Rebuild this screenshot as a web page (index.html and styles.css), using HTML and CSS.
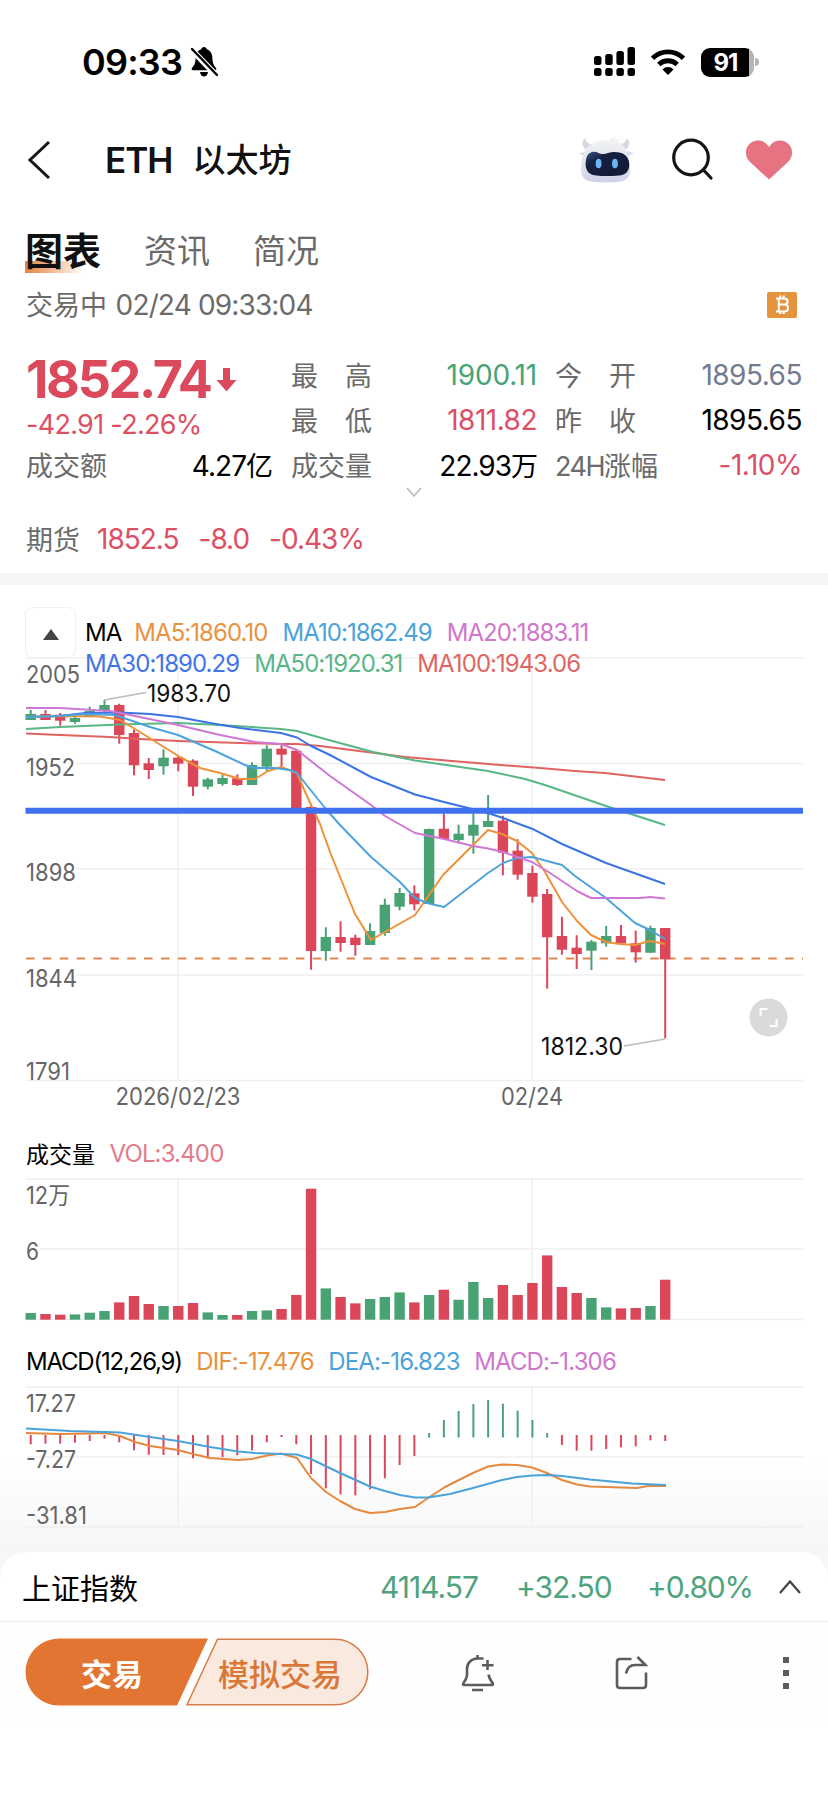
FILE: index.html
```
<!DOCTYPE html>
<html lang="zh-CN">
<head>
  <meta charset="UTF-8" />
  <meta name="viewport" content="width=device-width, initial-scale=1" />
  <title>ETH 以太坊</title>
  <link rel="stylesheet" href="styles.css">
</head>
<body>
  <!-- status bar -->
  <div class="status-bar">
    <span class="time">09:33</span>
    <svg class="mute" width="30" height="32" viewBox="0 0 30 32"><path d="M15 1c-1.600 0-2.600 1-2.800 2.300C8.500 4.600 6.700 8 6.600 12c-.1 5.500-1.600 7.700-3.600 9.900-.7.800-.4 2.300 1.200 2.300h21.600c1.600 0 1.900-1.500 1.200-2.300-2-2.200-3.500-4.400-3.600-9.900-.1-4-1.900-7.400-5.600-8.700C17.600 2 16.600 1 15 1zM11 26h8c-.4 3-2 4.500-4 4.500S11.400 29 11 26z"/><path d="M2 3l26 27" stroke="#fff" stroke-width="6"/><path d="M3 3l25 26" stroke="#000" stroke-width="2.400" stroke-linecap="round"/></svg>
    <svg class="signal" width="42" height="30" viewBox="0 0 42 30"><rect x="0" y="9" width="7.500" height="9" rx="2.500"/><rect x="11.200" y="7" width="7.500" height="11" rx="2.500"/><rect x="22.400" y="4" width="7.500" height="14" rx="2.500"/><rect x="33.500" y="0" width="7.500" height="18" rx="2.500"/><rect x="0" y="21" width="7.500" height="8" rx="2.500"/><rect x="11.200" y="21" width="7.500" height="8" rx="2.500"/><rect x="22.400" y="21" width="7.500" height="8" rx="2.500"/><rect x="33.500" y="21" width="7.500" height="8" rx="2.500"/></svg>
    <svg class="wifi" width="36" height="28" viewBox="0 0 36 28"><path d="M2.500 10.200a22 22 0 0 1 31 0M8.800 16.500a13.200 13.200 0 0 1 18.400 0" fill="none" stroke="#000" stroke-width="4.800"/><path d="M18 27l-5.600-5.600a8 8 0 0 1 11.200 0z"/></svg>
    <div class="battery"><span>91</span></div><i class="battery-tip"></i>
  </div>

  <header class="nav">
    <svg class="back" width="26" height="40" viewBox="0 0 26 40"><path d="M23 2L4 20l19 18"/></svg>
    <h1>ETH<span>以太坊</span></h1>
    <svg class="robot" width="61" height="48" viewBox="0 0 54 48" preserveAspectRatio="none">
      <defs>
        <linearGradient id="head" x1="0" y1="0" x2="0" y2="1"><stop offset="0" stop-color="#f4f5f8"/><stop offset=".6" stop-color="#e0e2e9"/><stop offset="1" stop-color="#cdd2e8"/></linearGradient>
        <linearGradient id="face" x1="0" y1="0" x2="1" y2="1"><stop offset="0" stop-color="#3a5488"/><stop offset=".3" stop-color="#16203f"/><stop offset="1" stop-color="#121936"/></linearGradient>
      </defs>
      <path d="M8 13C5 9 5 5 8 2c1 4 3 6 8 7zM45 13c3-4 3-8 0-11-1 4-3 6-8 7z" fill="#d5d8e2"/>
      <path d="M2 17l7-1v5zM51 17l-6-2v6z" fill="#d8dbe5"/>
      <path d="M14 8c5-4 9-3 15-4l6-4-1 4 5-1-2 3c8 4 9 11 10 20 2 10 2 19-11 20-6 .6-13 .6-19 0C4 45 4 37 5 27 6 18 7 12 14 8z" fill="url(#head)"/>
      <path d="M9 23c1-7 7-9 11-6 5 3 8-1 14-1 8 0 12 4 13 10 1 9-3 13-9 13.500-8 .7-14 .7-20 0C9 39 7.500 31 9 23z" fill="url(#face)"/>
      <ellipse cx="20" cy="27.500" rx="2.600" ry="4.700" fill="#69b5f5"/><ellipse cx="34.500" cy="27.500" rx="2.600" ry="4.700" fill="#69b5f5"/>
    </svg>
    <svg class="search" width="42" height="44" viewBox="0 0 42 44"><circle cx="19" cy="19.500" r="17.300"/><path d="M31.500 32l7.500 8"/></svg>
    <svg class="heart" width="48" height="40" viewBox="0 0 48 40"><path d="M24 39.500L4.500 21.500C-.5 16 0 8 4.500 4 9.500-.8 18-.5 22 4.500l2 2.500 2-2.500C30-.5 38.500-.8 43.500 4c4.500 4 5 12 0 17.500z"/></svg>
  </header>

  <nav class="tabs">
    <a class="tab active">图表</a>
    <a class="tab">资讯</a>
    <a class="tab">简况</a>
  </nav>

  <div class="session">
    <span>交易中 <b>02/24 09:33:04</b></span>
    <svg width="30" height="26" viewBox="0 0 30 26"><rect width="30" height="26" rx="2" fill="#e3943c"/><path d="M9 6.500h8.200c2.300 0 3.300 1.200 3.300 3 0 1.900-1.200 3-3.200 3 2.400 0 3.700 1.200 3.700 3.400 0 2.300-1.500 3.600-4 3.600H9M11.800 6.500v13M11.800 12.500h5.500M13.200 3.500v3M16.700 3.500v3M13.200 19.500v2.600M16.700 19.500v2.600" fill="none" stroke="#fff" stroke-width="2.100"/></svg>
  </div>

  <section class="quote">
    <div class="price">1852.74<svg width="21" height="25" viewBox="0 0 21 25"><path d="M7 1h7v12h6.500L10.500 24.500.5 13H7z"/></svg></div>
    <div class="change">-42.91 -2.26%</div>
    <div class="cell c1 r3"><label>成交额</label><span class="cn">4.27<em>亿</em></span></div>
    <div class="cell c2 r1"><label class="wide">最高</label><span class="green">1900.11</span></div>
    <div class="cell c2 r2"><label class="wide">最低</label><span class="red">1811.82</span></div>
    <div class="cell c2 r3"><label>成交量</label><span class="cn">22.93<em>万</em></span></div>
    <div class="cell c3 r1"><label class="wide">今开</label><span class="slate">1895.65</span></div>
    <div class="cell c3 r2"><label class="wide">昨收</label><span>1895.65</span></div>
    <div class="cell c3 r3"><label><b>24H</b>涨幅</label><span class="red">-1.10%</span></div>
  </section>
  <div class="more"><svg width="16" height="11" viewBox="0 0 16 11"><path d="M1 1l7 8 7-8"/></svg></div>

  <div class="futures"><label>期货</label><span>1852.5</span><span>-8.0</span><span>-0.43%</span></div>
  <div class="divider"></div>

  <section class="charts">
    <div class="ma-head">
      <button class="fold"><svg width="16" height="11" viewBox="0 0 16 11"><path d="M8 0l8 11H0z"/></svg></button>
      <div class="legend">
        <div><span>MA</span><span class="o">MA5:1860.10</span><span class="l">MA10:1862.49</span><span class="p">MA20:1883.11</span></div>
        <div><span class="b">MA30:1890.29</span><span class="g">MA50:1920.31</span><span class="r">MA100:1943.06</span></div>
      </div>
    </div>
    <svg id="kline" class="plot" width="828" height="474" viewBox="0 656 828 474"></svg>
    <div class="sub-head vol"><span>成交量</span><span class="v">VOL:3.400</span></div>
    <svg id="volume" class="plot" width="828" height="164" viewBox="0 1176 828 164"></svg>
    <div class="sub-head macd"><span>MACD(12,26,9)</span><span class="o">DIF:-17.476</span><span class="l">DEA:-16.823</span><span class="p">MACD:-1.306</span></div>
    <svg id="macd" class="plot" width="828" height="168" viewBox="0 1384 828 168"></svg>
  </section>

  <div class="index-wrap">
    <div class="index-bar">
      <span class="name">上证指数</span>
      <span class="i1">4114.57</span><span class="i2">+32.50</span><span class="i3">+0.80%</span>
      <svg width="24" height="16" viewBox="0 0 24 16"><path d="M2 14L12 2.500 22 14"/></svg>
    </div>
  </div>

  <footer class="actions">
    <div class="trade">
      <svg width="346" height="69" viewBox="0 0 346 69">
        <path d="M34 .5H183L152 67.500H34A33.500 33.500 0 0 1 34 .5z" fill="#e27531"/>
        <path d="M192.500 1.200H310a32.800 32.800 0 0 1 0 65.600H162z" fill="#fae9de" stroke="#d67b48" stroke-width="1.500"/>
      </svg>
      <span class="real">交易</span><span class="demo">模拟交易</span>
    </div>
    <svg class="act bell" width="34" height="38" viewBox="0 0 34 38"><path d="M22.500 4.500h-6C10 4.700 6 9 6 15v6c0 3-1.500 5-3.500 8-.8 1.300-.6 2 .8 2h27.400c1.400 0 1.600-.7.800-2-2-3-3.800-5-3.800-8.500M16.500 1v3.500M26.500 6v10M21 11.200h11.500M11 36h11"/></svg>
    <svg class="act share" width="34" height="36" viewBox="0 0 34 36"><path d="M17.500 4H6Q3 4 3 7v23q0 3 3 3h23q3 0 3-3V17.500M12 18.500c1-5 4-8.500 9-8.500h10.500L23.500 2"/></svg>
    <svg class="dots" width="8" height="34" viewBox="0 0 8 34"><path d="M1 1h6v6H1zM1 14h6v6H1zM1 27h6v6H1z"/></svg>
  </footer>

  <script>
    const RED='#db4659',GREEN='#49a274',GRID='#efeff1';
    const STEP=14.756,X0=30.7;
    const cx=i=>X0+i*STEP;

    // ---------- data: [up?, high, body top, body bottom, low, volume, macd end] ----------
    const bars=[
      [1,710,714,720,720,6.7,1444.3],[0,710,714,720,720,5.7,1443.7],[0,713,714.7,720.7,725.7,5,1443.7],[1,716,718,722,723.7,5.3,1442.7],
      [1,706.7,711,716,716,7,1441],[1,700,705,711,712,8.7,1438.7],[0,703.7,705,735,743.7,17.3,1442.3],[0,729.7,733,765.3,775.3,23.7,1450.3],
      [0,758,763.3,770,779,15.7,1454.7],[1,749.3,757.7,766.3,774.7,13.7,1455],[0,756,757.7,763.7,771.3,13.7,1455],[0,759.3,760.7,786.7,796,16.7,1458.3],
      [1,777.7,779.3,786.7,789.3,7.3,1458.3],[1,775,778,784,785.7,4.7,1457],[0,774.3,778.3,785,786,4.7,1455.3],[1,762.3,765,785,785,8.7,1450.3],
      [1,745.3,748.7,766.7,771,9.3,1442.3],[0,744.7,748.7,754.7,766.7,10.7,1437],[0,750,750.7,808,808,24.7,1444.3],[0,806,807,951,969.7,131,1474],
      [1,927.3,937,951,960.7,31.3,1488.3],[0,921.3,937,943,951.7,22.7,1494.3],[0,934.7,937.7,945,955.7,16.3,1495.3],[1,923.3,931,945,945,20.7,1489.3],
      [1,898.7,904.7,933,935.7,22.7,1478.3],[1,888,893,906.7,910.3,27.3,1465],[0,885.3,893.3,904.3,910.3,17.3,1456],[1,828.7,829,904,904,24.7,1433],
      [0,813.3,828.7,839,839,30,1420],[1,824.7,833.7,840,843.3,20,1411],[1,813,824.7,835.7,853.7,37.7,1404],[1,795,821,827,827,21.7,1400],
      [0,815.7,820.7,852.7,875.3,34.7,1403.7],[0,839.3,850.7,874.7,879.7,24.7,1410.7],[0,865.7,873,896.7,902.7,36.7,1420],[0,889,894,937.3,988.7,64.3,1433],
      [0,916.7,936,949.7,954.7,32.7,1445],[0,935.3,947.7,954,969,26.7,1450.7],[1,940,941.7,950.7,970,21.7,1450.7],[1,926,936,943.3,946.7,12.3,1449],
      [0,925,936,943.3,943.3,11.3,1447.3],[0,930.7,943.3,952.3,962.7,11.7,1446.3],[1,925.7,928,952.7,953,13.7,1440.3],[0,928,928,959.3,1038.3,40,1441]
    ];
    const ma={
      '#df6460':'26,733.5 60,735 110,737 140,739 178,741 240,743 281,744 297,744 320,746 371,752.5 405,757 470,762.5 540,768 575,771 605,773 665,780',
      '#58b785':'26,729 60,727 120,724.5 178,723 220,725 281,729 297,731 311,735 325,739 373,752 415,760.5 488,771 525,779 545,785 606,806 665,825',
      '#3b73e2':'26,717 60,716 85,713 120,712.5 150,714 178,717 210,723 240,728 281,733 297,737.5 311,746 330,755 371,777 415,794.5 444,802 488,813 503,818 532,828.7 562,844 606,863 665,884',
      '#ee9139':'26,717 60,716 100,716.500 120,720 135,729 180,757 200,768 220,773 240,779 255,779 268,771 281,767 297,773 306,794 320,824 330,852 355,914 371,940 415,915 443,875 488,830 502,834 517,841 532,853 545,872 562,902 577,921 591,935 606,942 620,944 635,945 650,941 665,944',
      '#4da4dc':'26,717 60,716 85,714 115,715 150,727 178,735 215,751 245,765 255,768 275,768 290,770 297,773 325,808 340,825 371,857 400,882 415,898 427,903 444,907 488,873 503,863 517,858 532,857 562,865 575,876 606,898 635,923 650,930 665,939',
      '#d077d5':'26,708 60,708 110,711 135,716 178,725 220,735 255,742 281,744 297,750 330,776 371,805 385,816 415,833 444,839 473,846 488,848.5 503,852 532,862 547,871 577,891 591,898 640,898 650,897 665,898.5'
    };
    const dif='26,1433 60,1434 90,1433.5 105,1433 120,1436 135,1442 150,1446 178,1450 193,1454 210,1458 238,1460 252,1459 267,1455.5 281,1453.5 297,1458 311,1478 326,1492 340,1501 355,1509 370,1513 385,1512 400,1509 415,1507 428,1498 445,1487 473,1473 488,1466.5 502,1464.5 517,1465 532,1467.5 547,1473 562,1480 577,1484.5 590,1486.5 637,1488 648,1486 666,1486';
    const dea='26,1428.5 70,1431 105,1432 120,1432.5 150,1437 178,1441 210,1447 238,1451.5 255,1453 281,1454 297,1454.5 311,1459 340,1473 370,1486.5 385,1491 400,1495 415,1497.5 428,1497.5 450,1494 473,1488 502,1480 517,1477 532,1475.5 547,1475 562,1476 590,1479.5 632,1483.5 666,1485';

    // ---------- svg helpers ----------
    const line=(x1,y1,x2,y2,c,w)=>`<line x1="${x1}" y1="${y1}" x2="${x2}" y2="${y2}" stroke="${c}" stroke-width="${w}"/>`;
    const rect=(x,y,w,h,c)=>`<rect x="${x}" y="${y}" width="${w}" height="${h}" fill="${c}"/>`;
    const poly=(p,c)=>`<polyline points="${p}" fill="none" stroke="${c}" stroke-width="2" stroke-linejoin="round"/>`;
    const text=(x,y,w,t,cls='')=>`<text x="${x}" y="${y}" textLength="${w}" lengthAdjust="spacingAndGlyphs" class="${cls}">${t}</text>`;
    const grid=(ys)=>ys.map(y=>line(26,y,803,y,GRID,1.5)).join('')+[178,532].map(x=>line(x,ys[0],x,ys[ys.length-1],GRID,1.5)).join('');

    // ---------- candles ----------
    let k=grid([658,763.5,869,975,1080.5]);
    k+=rect(24,666,56,18,'#fff')+rect(24,758,52,18,'#fff')+rect(24,864,52,18,'#fff')+rect(24,970,52,18,'#fff');
    k+=`<line x1="26" y1="958.5" x2="803" y2="958.5" stroke="#e48550" stroke-width="1.8" stroke-dasharray="8.500 8.370"/>`;
    bars.forEach(([up,h,t,b,l],i)=>{const c=up?GREEN:RED;k+=line(cx(i),h,cx(i),l,c,2)+rect(cx(i)-5.2,t,10.4,b-t,c);});
    for(const c in ma)k+=poly(ma[c],c);
    k+=line(25.5,810.7,803,810.7,'#3f70ee',6);
    k+=line(104,700,146,692.5,'#bbb',1.5)+line(624,1046,665,1039,'#bbb',1.5);
    k+=text(26,682.5,54,'2005')+text(26,775.5,49,'1952')+text(26,881,50,'1898')+text(26,987,51,'1844')+text(26,1080,44,'1791');
    k+=text(147,702,84,'1983.70','dark')+text(541,1055,82,'1812.30','dark');
    k+=text(115.5,1105,125,'2026/02/23')+text(501,1105,62,'02/24');
    k+='<circle cx="768.5" cy="1017.5" r="19" fill="#dadada"/><path d="M760.500 1016v-7h7M776.500 1019v7h-7" fill="none" stroke="#fff" stroke-width="2"/>';
    document.getElementById('kline').innerHTML=k;

    // ---------- volume ----------
    let v=grid([1179,1249,1319.5]);
    bars.forEach((d,i)=>{v+=rect(cx(i)-5.2,1319.7-d[5],10.4,d[5],d[0]?GREEN:RED);});
    v+=rect(24,1242,16,18,'#fff')+text(26,1204,44,'12万')+text(26,1260,13,'6');
    document.getElementById('volume').innerHTML=v;

    // ---------- macd ----------
    let m=grid([1387,1457,1527]);
    bars.forEach((d,i)=>{m+=d[6]<1435?line(cx(i),d[6],cx(i),1437.5,GREEN,2):line(cx(i),1435,cx(i),d[6],RED,2);});
    m+=poly(dif,'#e5893f')+poly(dea,'#4ba3d9');
    m+=text(26,1411.5,50,'17.27')+text(26,1468,50,'-7.27')+text(26,1524,61,'-31.81');
    document.getElementById('macd').innerHTML=m;
  </script>
</body>
</html>
```
FILE: styles.css
```
*{box-sizing:border-box}
html,body{margin:0;padding:0}
body{width:828px;height:1796px;overflow:hidden;background:#fff;color:#000;font-family:Inter,'Noto Sans CJK SC',sans-serif;font-size:27px;font-weight:400}
svg{display:block;flex:none}
em,b{font-style:normal;font-weight:400}

.status-bar{display:flex;align-items:center;height:124px;padding-left:82px}
.time{width:107px;font-size:36px;font-weight:600;letter-spacing:-.8px;line-height:44px}
.signal{margin-left:375px}
.wifi{margin-left:14px}
.battery{display:flex;align-items:center;justify-content:center;width:53px;height:29px;margin-left:15px;padding-right:4px;border-radius:9px;background:linear-gradient(90deg,#000 48px,#b5b5b5 48px);color:#fff;font-size:24px;font-weight:700;letter-spacing:-1px}
.battery-tip{width:4px;height:8px;margin-left:1px;border-radius:0 4px 4px 0;background:#b5b5b5}

.nav{display:flex;align-items:center;height:80px;padding-left:26px;margin-top:-4px}
.nav svg{fill:none;stroke:#151515;stroke-width:3}
.nav h1{display:flex;align-items:center;width:500px;margin:0 0 0 53px;font-size:35px;font-weight:600;line-height:44px;letter-spacing:-1px;color:#111}
.nav h1 span{margin-left:20px;font-size:33px;font-weight:500;letter-spacing:0}
.nav .robot{margin-left:-29px;stroke:none}
.nav .robot path,.nav .robot ellipse{stroke:none}
.nav .search{margin-left:35px;stroke-width:3.200;stroke-linecap:round}
.nav .heart{margin-left:31px;fill:#e67282;stroke:none}

.tabs{display:flex;align-items:center;height:72px;padding:6px 0 0 25px;margin-top:12px}
.tab{font-size:33px;line-height:44px;color:#6a6a6a}
.tab+.tab{margin-left:43px}
.tab.active{font-size:38px;font-weight:700;color:#111;background:linear-gradient(90deg,#e6813f,#fbe3d3 80%,#fff) 0 32px/58px 12px no-repeat}

.session{display:flex;align-items:center;justify-content:space-between;height:44px;padding:0 31px 5px 26px;color:#6b6b6b;font-size:27px}
.session b{margin-left:1px;font-size:28px;letter-spacing:-.85px}
.session svg{margin-top:3px}

.quote{display:grid;grid-template-columns:246px 246px 246px;grid-template-rows:45px 45px 45px;column-gap:19px;padding:24px 0 0 26px}
.price{grid-area:1/1;display:flex;align-items:center;height:55px;color:#db4a5c;font-size:52px;font-weight:700;letter-spacing:-2.300px;line-height:1}
.price svg{margin-left:5px;fill:#db4a5c}
.change{grid-area:2/1;align-self:end;margin-bottom:1px;color:#dc5064;font-size:27px;line-height:32px;letter-spacing:-.7px}
.cell{display:flex;align-items:center;justify-content:space-between;white-space:nowrap}
.cell label,.futures label{color:#6b6b6b;letter-spacing:0}
.cell label b{letter-spacing:-1.500px}
.cell label.wide{letter-spacing:27px}
.cell span{font-size:28px;letter-spacing:-.5px}
.cell .green,.cell .c2 .red{letter-spacing:-.2px}
.cell .cn{letter-spacing:-1px}
.cell em{font-size:27px}
.c1{grid-column:1}
.c2{grid-column:2}
.c3{grid-column:3;margin-left:-1px}
.r1{grid-row:1}
.r2{grid-row:2}
.r3{grid-row:3}
.green{color:#48a377}
.red{color:#dc4f66}
.slate{color:#737b90}

.more{display:flex;justify-content:center;height:25px}
.more svg{fill:none;stroke:#bbb;stroke-width:1.800}
.futures{display:flex;align-items:center;height:61px;padding:0 0 8px 26px;color:#dc5064;font-size:28px;letter-spacing:-1px}
.futures label{margin-right:-3px;font-size:27px}
.futures span{margin-left:20px}
.divider{height:12px;background:#f5f5f6}

.charts{background:linear-gradient(#fff 0,#fff 870px,#f6f6f7 967px)}
.ma-head{display:flex;height:71px;padding:22px 0 0 25px}
.fold{display:flex;align-items:center;justify-content:center;width:51px;height:51px;margin:0;padding:3px 0 0;border:1.500px solid #efeff1;border-radius:8px;background:#fff}
.fold svg{fill:#444}
.legend{position:relative;z-index:1;padding:10px 0 0 9px;font-size:24px;line-height:31px;letter-spacing:-.95px}
.legend div{display:flex;gap:15px}
.legend span:first-child:not(.b){margin-right:-2px}
.plot{font-size:24px}
.plot text{fill:#666}
.plot text.dark{fill:#111}
.sub-head{display:flex;align-items:center;gap:14.500px;padding-left:26px;font-size:24px;letter-spacing:-.85px}
.vol{height:46px}
.vol span:first-child{font-size:23px;letter-spacing:0}
.macd{height:44px;padding-bottom:2px}
.macd span:first-child{letter-spacing:-1.200px}
.o{color:#e9923f}
.l{color:#4ba3d9}
.p{color:#cf77cb}
.b{color:#4274e4}
.g{color:#5bb687}
.r{color:#de6763}
.v{color:#e17c8b}

.index-wrap{background:#f7f7f8}
.index-bar{display:flex;align-items:center;height:70px;padding-left:22px;border-bottom:1.500px solid #ececee;border-radius:26px 26px 0 0;background:#fff;color:#4fa37d;font-size:30px;letter-spacing:-1px}
.index-bar .name{width:358px;color:#000;font-size:29px;letter-spacing:0}
.i1{width:136px}
.i2{width:131px}
.i3{width:131px;letter-spacing:-1.200px}
.index-bar svg{fill:none;stroke:#444;stroke-width:2.200}

.actions{display:flex;align-items:center;height:104px;padding:0 0 3px 25px;background:#fefefe}
.trade{display:grid;grid-template-columns:160px 186px;align-items:center;width:346px;height:69px;font-size:31px;font-weight:500;text-align:center}
.trade svg{grid-area:1/1/2/3}
.trade .real{grid-area:1/1;padding-left:14px;color:#fff;font-weight:700}
.trade .demo{grid-area:1/2;padding-left:4px;color:#da7736}
.act{fill:none;stroke:#5c5c5c;stroke-width:2.600}
.bell{margin-left:90px}
.share{margin-left:119px}
.dots{margin-left:134px;fill:#5c5c5c}
```
